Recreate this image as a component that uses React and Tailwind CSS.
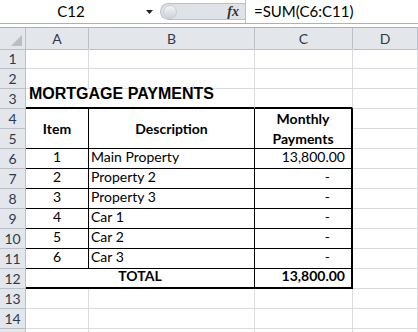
import React from 'react';

// Excel 2010 look: formula bar + sheet grid
const BODY = "font-['Lato',sans-serif] text-[14px] text-black";
const HDR = "flex items-center justify-center bg-[#e3e7ec] border-r border-b border-[#b9c0c8] text-[14px] text-[#30394a] font-['Lato',sans-serif]";
const GRIDLINE = 'border-r border-b border-[#d9dbde]';

const RowHead = ({ n }) => <div className={HDR}>{n}</div>;

const Blank = () => <div className={GRIDLINE} />;

const FormulaBar = () => (
  <div className="flex h-[24px] items-stretch border-b border-[#a8b1bc] bg-white">
    <div className="relative flex w-[160px] items-center justify-center font-['Lato',sans-serif] text-[15px] text-black">
      <span className="ml-[-18px]">C12</span>
      <svg className="absolute right-[6px] top-[10px]" width="8" height="5" viewBox="0 0 8 5">
        <path d="M0 0h7L3.5 4z" fill="#222" />
      </svg>
    </div>
    <div className="my-[3px] flex w-[85px] items-center rounded-l-full border border-r-0 border-[#b9c0c8] bg-[#dfe3e8]">
      <div className="ml-[2px] h-[14px] w-[14px] rounded-full border border-[#c6ccd3] bg-gradient-to-b from-[#f4f5f7] to-[#cdd2d8]" />
      <span className="ml-auto mr-[6px] font-['Liberation_Serif',serif] text-[14px] font-bold italic text-[#333]">fx</span>
    </div>
    <div className="flex flex-1 items-center border-l border-[#b9c0c8] pl-[8px] font-['Lato',sans-serif] text-[15px] text-black">
      =SUM(C6:C11)
    </div>
  </div>
);

export default function App() {
  const data = [
    [6, '1', 'Main Property', '13,800.00'],
    [7, '2', 'Property 2', '-'],
    [8, '3', 'Property 3', '-'],
    [9, '4', 'Car 1', '-'],
    [10, '5', 'Car 2', '-'],
    [11, '6', 'Car 3', '-'],
  ];

  return (
    <div className="h-[332px] w-[418px] overflow-hidden bg-white">
      <FormulaBar />
      <div className="h-[4px] border-b border-[#a8b1bc] bg-white" />

      {/* column headers */}
      <div className="grid h-[21px] grid-cols-[26px_63px_166px_98px_65px]">
        <div className={`${HDR} relative`}>
          <svg className="absolute bottom-[3px] right-[3px]" width="11" height="11" viewBox="0 0 11 11">
            <path d="M11 0v11H0z" fill="#b8bec6" />
          </svg>
        </div>
        <div className={HDR}>A</div>
        <div className={HDR}>B</div>
        <div className={HDR}>C</div>
        <div className={HDR}>D</div>
      </div>

      <div className={`grid grid-cols-[26px_63px_166px_98px_65px] auto-rows-[20px] ${BODY}`}>
        {[1, 2].map((n) => (
          <React.Fragment key={n}>
            <RowHead n={n} />
            <Blank />
            <Blank />
            <Blank />
            <Blank />
          </React.Fragment>
        ))}

        {/* row 3: title */}
        <RowHead n={3} />
        <div className="col-span-2 flex items-end whitespace-nowrap border-r border-b-2 border-r-[#d9dbde] border-b-black pb-[1px] pl-[3px] font-['Liberation_Sans',sans-serif] text-[16px] font-bold">
          MORTGAGE PAYMENTS
        </div>
        <div className="border-r border-b-2 border-r-[#d9dbde] border-b-black" />
        <Blank />

        {/* rows 4-5: headers */}
        <RowHead n={4} />
        <div className="row-span-2 flex items-center justify-center border-r border-b border-black font-bold">Item</div>
        <div className="row-span-2 flex items-center justify-center border-r border-b border-black font-bold">Description</div>
        <div className="row-span-2 flex flex-col items-center justify-center border-r-2 border-b border-black font-bold leading-[20px]">
          <span>Monthly</span>
          <span>Payments</span>
        </div>
        <Blank />
        <RowHead n={5} />
        <Blank />

        {data.map(([n, item, desc, amt]) => (
          <React.Fragment key={n}>
            <RowHead n={n} />
            <div className="flex items-end justify-center border-r border-b border-black pb-[1px]">{item}</div>
            <div className="flex items-end border-r border-b border-black pb-[1px] pl-[2px]">{desc}</div>
            <div
              className={`flex items-end justify-end border-r-2 border-b border-black pb-[1px] ${
                amt === '-' ? 'pr-[21px]' : 'pr-[6px]'
              }`}
            >
              {amt}
            </div>
            <Blank />
          </React.Fragment>
        ))}

        {/* row 12: total */}
        <RowHead n={12} />
        <div className="col-span-2 flex items-end justify-center border-r border-b-2 border-black pb-[1px] font-bold">TOTAL</div>
        <div className="flex items-end justify-end border-r-2 border-b-2 border-black pb-[1px] pr-[6px] font-bold">13,800.00</div>
        <Blank />

        {[13, 14].map((n) => (
          <React.Fragment key={n}>
            <RowHead n={n} />
            <Blank />
            <Blank />
            <Blank />
            <Blank />
          </React.Fragment>
        ))}
        <div className="bg-[#e3e7ec] border-r border-[#b9c0c8]" />
        <div className="border-r border-[#d9dbde]" />
        <div className="border-r border-[#d9dbde]" />
        <div className="border-r border-[#d9dbde]" />
        <div className="border-r border-[#d9dbde]" />
      </div>
    </div>
  );
}
